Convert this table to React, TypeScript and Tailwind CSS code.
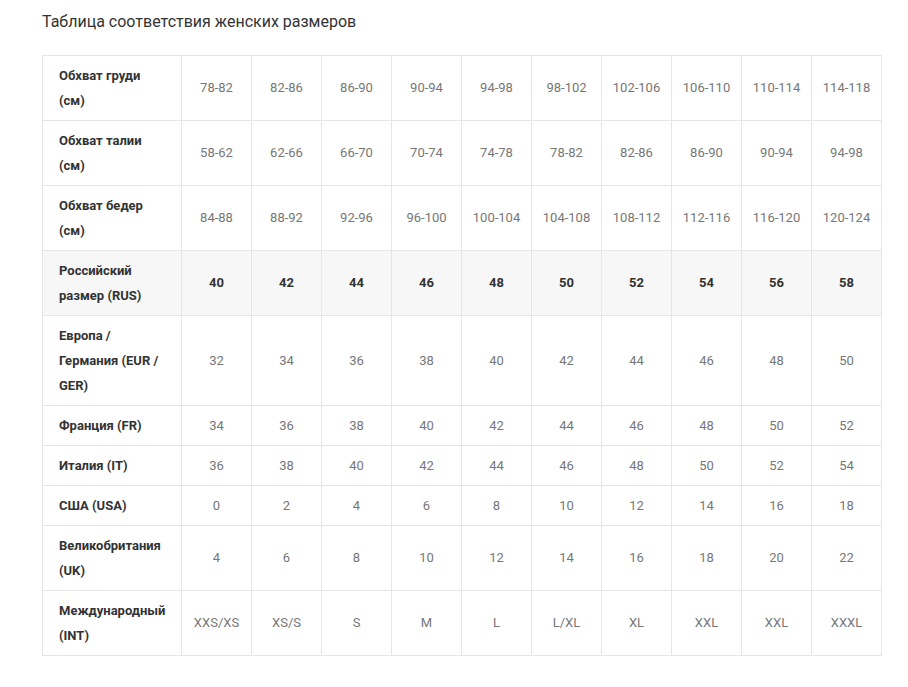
const cols = 10;

type Row = { label: string; values: string[]; highlight?: boolean; lines: number };

const rows: Row[] = [
  { label: 'Обхват груди (см)', lines: 2, values: ['78-82', '82-86', '86-90', '90-94', '94-98', '98-102', '102-106', '106-110', '110-114', '114-118'] },
  { label: 'Обхват талии (см)', lines: 2, values: ['58-62', '62-66', '66-70', '70-74', '74-78', '78-82', '82-86', '86-90', '90-94', '94-98'] },
  { label: 'Обхват бедер (см)', lines: 2, values: ['84-88', '88-92', '92-96', '96-100', '100-104', '104-108', '108-112', '112-116', '116-120', '120-124'] },
  { label: 'Российский размер (RUS)', lines: 2, values: ['40', '42', '44', '46', '48', '50', '52', '54', '56', '58'], highlight: true },
  { label: 'Европа / Германия (EUR / GER)', lines: 3, values: ['32', '34', '36', '38', '40', '42', '44', '46', '48', '50'] },
  { label: 'Франция (FR)', lines: 1, values: ['34', '36', '38', '40', '42', '44', '46', '48', '50', '52'] },
  { label: 'Италия (IT)', lines: 1, values: ['36', '38', '40', '42', '44', '46', '48', '50', '52', '54'] },
  { label: 'США (USA)', lines: 1, values: ['0', '2', '4', '6', '8', '10', '12', '14', '16', '18'] },
  { label: 'Великобритания (UK)', lines: 2, values: ['4', '6', '8', '10', '12', '14', '16', '18', '20', '22'] },
  { label: 'Международный (INT)', lines: 2, values: ['XXS/XS', 'XS/S', 'S', 'M', 'L', 'L/XL', 'XL', 'XXL', 'XXL', 'XXXL'] },
];

export default function App() {
  return (
    <div className="min-h-[687px] bg-white pl-[42px] pt-[10px] font-['Roboto','Liberation_Sans',sans-serif]">
      <h2 className="text-[16px] leading-[24px] font-normal text-[#333]">
        Таблица соответствия женских размеров
      </h2>
      <table className="mt-[21px] w-[840px] table-fixed border-collapse border border-[#e6e6e6] text-[13px] leading-[25px]">
        <colgroup>
          <col className="w-[139px]" />
          {Array.from({ length: cols }).map((_, i) => (
            <col key={i} className="w-[70px]" />
          ))}
        </colgroup>
        <tbody>
          {rows.map(row => (
            <tr key={row.label} className={row.highlight ? 'bg-[#f7f7f7]' : 'bg-white'}>
              <th className="border border-[#e6e6e6] py-[7px] pl-[16px] pr-[14px] text-left align-middle font-bold text-[#333]">
                {row.label}
              </th>
              {row.values.map((v, i) => (
                <td
                  key={i}
                  className={`border border-[#e6e6e6] text-center align-middle ${
                    row.lines === 2 ? 'pt-[6px] pb-[8px]' : 'py-[7px]'
                  } ${row.highlight ? 'font-bold text-[#333]' : 'text-[#777]'}`}
                >
                  {v}
                </td>
              ))}
            </tr>
          ))}
        </tbody>
      </table>
    </div>
  );
}
